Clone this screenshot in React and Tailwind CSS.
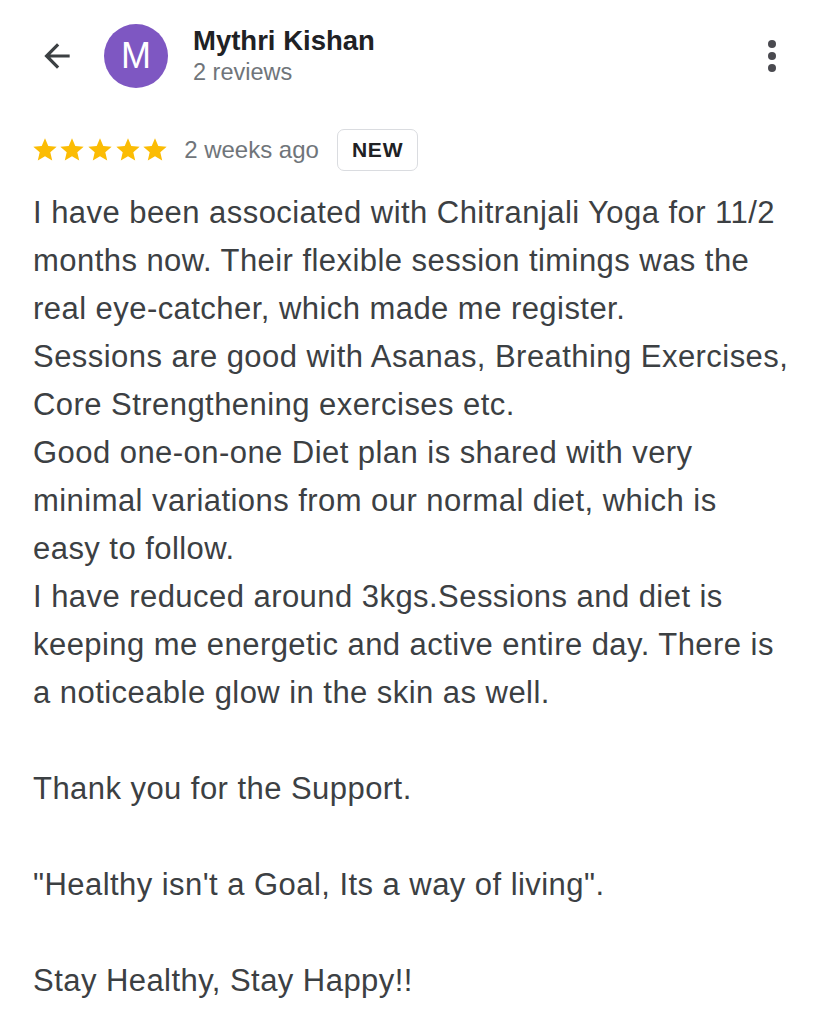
const lines = [
  "I have been associated with Chitranjali Yoga for 11/2",
  "months now. Their flexible session timings was the",
  "real eye-catcher, which made me register.",
  "Sessions are good with Asanas, Breathing Exercises,",
  "Core Strengthening exercises etc.",
  "Good one-on-one Diet plan is shared with very",
  "minimal variations from our normal diet, which is",
  "easy to follow.",
  "I have reduced around 3kgs.Sessions and diet is",
  "keeping me energetic and active entire day. There is",
  "a noticeable glow in the skin as well.",
  "",
  "Thank you for the Support.",
  "",
  "\"Healthy isn't a Goal, Its a way of living\".",
  "",
  "Stay Healthy, Stay Happy!!",
];

const Star = () => (
  <svg viewBox="0 0 24 24" className="w-[28px] h-[28px] -mx-[0.2px]" fill="#fbbc04">
    <path d="M12 17.27L18.18 21l-1.64-7.03L22 9.24l-7.19-.61L12 2 9.19 8.63 2 9.24l5.46 4.73L5.82 21z" />
  </svg>
);

export default function App() {
  return (
    <div className="min-h-screen bg-white font-['Liberation_Sans',Arial,sans-serif]">
      <div className="flex items-center h-[112px] pl-[38px] pr-[52px]">
        <svg viewBox="0 0 24 24" className="w-[38px] h-[38px]" fill="#3c4043">
          <path d="M20 11H7.83l5.59-5.59L12 4l-8 8 8 8 1.41-1.41L7.83 13H20v-2z" />
        </svg>
        <div className="ml-[28px] w-[64px] h-[64px] rounded-full bg-[#7e57c2] flex items-center justify-center text-white text-[36px]">
          M
        </div>
        <div className="ml-[25px] flex flex-col mt-[2px]">
          <span className="text-[27.5px] font-bold text-[#202124] leading-[30px]">Mythri Kishan</span>
          <span className="text-[23.5px] text-[#70757a] leading-[32px]">2 reviews</span>
        </div>
        <div className="ml-auto flex flex-col gap-[4px]">
          <span className="w-[8px] h-[8px] rounded-full bg-[#4a4a50]" />
          <span className="w-[8px] h-[8px] rounded-full bg-[#4a4a50]" />
          <span className="w-[8px] h-[8px] rounded-full bg-[#4a4a50]" />
        </div>
      </div>
      <div className="flex items-center pl-[31px] mt-[17px]">
        <div className="flex">
          <Star />
          <Star />
          <Star />
          <Star />
          <Star />
        </div>
        <span className="ml-[15px] text-[24px] text-[#70757a]">2 weeks ago</span>
        <span className="ml-[18px] h-[42px] px-[14px] border-[1.5px] border-[#dadce0] rounded-[7px] flex items-center text-[21px] tracking-[0.8px] font-bold text-[#202124]">
          NEW
        </span>
      </div>
      <div className="px-[33px] mt-[18px] text-[31px] tracking-[0.45px] leading-[48px] text-[#3c4043]">
        {lines.map((l, i) => (
          <div key={i} className="h-[48px] whitespace-nowrap">{l}</div>
        ))}
      </div>
    </div>
  );
}
